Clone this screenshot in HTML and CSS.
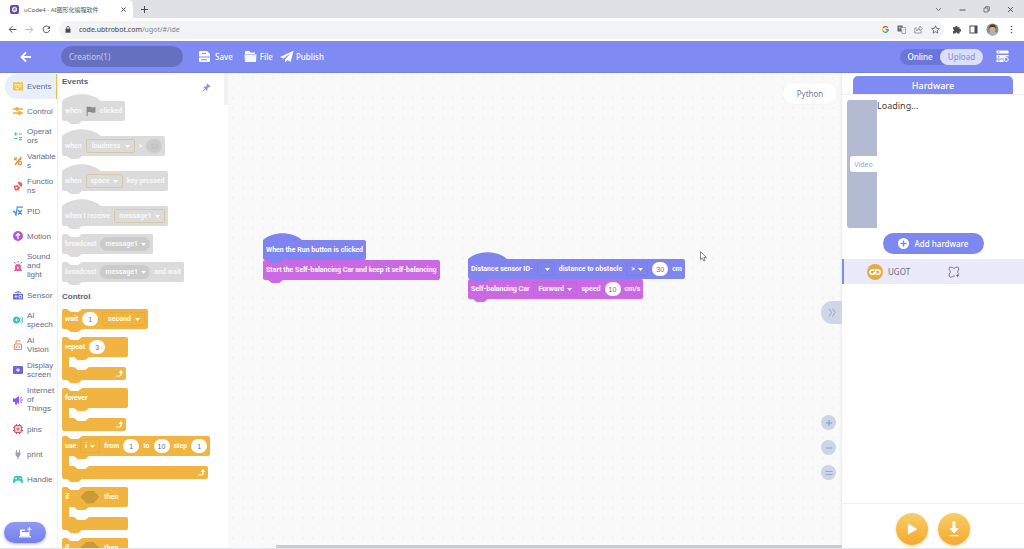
FILE: index.html
```html
<!DOCTYPE html>
<html lang="en">
<head>
    <meta charset="UTF-8">
    <meta name="viewport" content="width=device-width, initial-scale=1.0">
    <title>uCode4 - AI图形化编程软件</title>
    <link rel="stylesheet" href="styles.css">
</head>
<body>
    <!-- Browser tabs -->
    <div class="tabstrip">
        <div class="tab">
            <svg class="favicon" viewBox="0 0 9 9"><rect width="9" height="9" rx="2" fill="#5a4fb5"/><path d="M4.500 1.500 7 3v3L4.500 7.500 2 6V3z" fill="#e8d9f5"/><circle cx="4.500" cy="4.200" r="1.300" fill="#c58a3c"/></svg>
            <span class="tab-title">uCode4 - AI图形化编程软件</span>
            <button class="plain" aria-label="Close tab"><svg width="5" height="5" viewBox="0 0 5 5"><path d="M.5.5l4 4M4.500.5l-4 4" stroke="#45484c"/></svg></button>
        </div>
        <button class="plain new-tab" aria-label="New tab"><svg width="7" height="7" viewBox="0 0 7 7"><path d="M3.500 0v7M0 3.500h7" stroke="#45484c"/></svg></button>
        <div class="window-buttons">
            <button class="plain" aria-label="Search tabs"><svg width="7" height="7" viewBox="0 0 7 7"><path d="M1 2l2.500 2.700L6 2" stroke="#777" fill="none"/></svg></button>
            <button class="plain" aria-label="Minimize"><svg width="7" height="7" viewBox="0 0 7 7"><path d="M.5 4h6" stroke="#555"/></svg></button>
            <button class="plain" aria-label="Restore"><svg width="7" height="7" viewBox="0 0 7 7"><path d="M1 2h4v4H1zM2.500 2V.7h3.800v3.800H5" stroke="#555" stroke-width=".7" fill="none"/></svg></button>
            <button class="plain" aria-label="Close"><svg width="7" height="7" viewBox="0 0 7 7"><path d="M1 1l5 5M6 1L1 6" stroke="#444" stroke-width=".9"/></svg></button>
        </div>
    </div>
    <div class="toolbar">
        <button class="plain" aria-label="Back"><svg width="9" height="9" viewBox="0 0 9 9"><path d="M8.500 4.500H1.300M4.500 1.200L1.200 4.500l3.300 3.300" stroke="#555" fill="none"/></svg></button>
        <button class="plain" aria-label="Forward"><svg width="9" height="9" viewBox="0 0 9 9"><path d="M.5 4.500h7.200M4.500 1.200l3.300 3.300-3.300 3.300" stroke="#bbb" fill="none"/></svg></button>
        <button class="plain" aria-label="Reload"><svg width="9" height="9" viewBox="0 0 9 9"><path d="M7.600 5.200A3.300 3.300 0 1 1 7 2.300" stroke="#555" fill="none"/><path d="M8.100.7v3H5.200z" fill="#555"/></svg></button>
        <div class="omnibox">
            <svg width="6" height="7" viewBox="0 0 6 7"><path d="M.5 2.700h5v4h-5z" fill="#4a4d51"/><path d="M1.600 3V1.800a1.400 1.400 0 0 1 2.800 0V3" stroke="#4a4d51" stroke-width=".8" fill="none"/></svg>
            <span class="url">code.ubtrobot.com<span>/ugot/#/ide</span></span>
            <svg width="7" height="7" viewBox="0 0 7 7" fill="none" stroke-width="1.200"><path d="M5.700 1.500A2.800 2.800 0 0 0 1.100 2" stroke="#ea4335"/><path d="M1.100 2a2.900 2.900 0 0 0 0 3" stroke="#fbbc05"/><path d="M1.100 5a2.800 2.800 0 0 0 4 .8" stroke="#34a853"/><path d="M5.100 5.800a2.700 2.700 0 0 0 1.200-2.200H3.600" stroke="#4285f4"/></svg>
            <svg width="9" height="9" viewBox="0 0 9 9"><path d="M.5.5h5l1 6h-6z" fill="#666"/><path d="M4 2.500h4.500v6H5z" fill="#f5f5f5" stroke="#777" stroke-width=".6"/><path d="M1.500 2.500h2.500M2.800 1.500v3M5.500 4.500h2M6.500 4.500L5.700 7" stroke="#ccc" stroke-width=".7"/></svg>
            <svg width="9" height="9" viewBox="0 0 9 9" fill="none" stroke="#888" stroke-width=".8"><path d="M3 3H.8v5h6.400V6M2.700 6C3 3.500 4.500 3 6 3V1.200L8.400 3.700 6 5.800V4.300C4.500 4.300 3.500 4.800 2.700 6z"/></svg>
            <svg width="9" height="9" viewBox="0 0 9 9"><path d="M4.500.8l1.100 2.500 2.700.3-2 1.800.6 2.700-2.400-1.400-2.400 1.400.6-2.700-2-1.800 2.700-.3z" fill="none" stroke="#555" stroke-width=".8"/></svg>
        </div>
        <svg width="9" height="9" viewBox="0 0 9 9"><path d="M1 2.200h2.200a1.200 1.200 0 1 1 2.400 0h2v2a1.200 1.200 0 1 1 0 2.300v2H5.300a1 1 0 0 0-2 0H1V6.200a1 1 0 0 0 0-2z" fill="#4a4d51"/></svg>
        <svg width="9" height="9" viewBox="0 0 9 9"><rect x="1" y="1" width="7" height="7" fill="none" stroke="#4a4d51"/><path d="M5.500 1H8v7H5.500z" fill="#4a4d51"/></svg>
        <svg width="13" height="13" viewBox="0 0 13 13"><circle cx="6.500" cy="6.500" r="6" fill="#7d8f86"/><path d="M2 10.500C3 8.500 5 8 7 8.200s3.500 1 4 2.500A6 6 0 0 1 2 10.500z" fill="#9ab6c8"/><ellipse cx="6.500" cy="6.300" rx="2.800" ry="3.200" fill="#d9a98a"/><path d="M3 5.500C3 2.500 5 1.300 7 1.500s3.300 2 2.700 4C9 3.800 5 3.200 3 5.500z" fill="#4d3a2c"/></svg>
        <svg width="9" height="9" viewBox="0 0 9 9" fill="#555"><circle cx="4.500" cy="1.500" r=".8"/><circle cx="4.500" cy="4.500" r=".8"/><circle cx="4.500" cy="7.500" r=".8"/></svg>
    </div>

    <!-- App header -->
    <header class="header">
        <button class="plain back" aria-label="Go back"><svg width="12" height="12" viewBox="0 0 12 12"><path d="M11 6H2M6 1.500L1.500 6 6 10.500" stroke="#fff" stroke-width="1.800" fill="none"/></svg></button>
        <input class="project-name" type="text" value="Creation(1)" aria-label="Project name">
        <button class="plain menu"><svg width="13" height="13" viewBox="0 0 13 13"><path d="M2 1h7l3 3v2.500H1V2a1 1 0 0 1 1-1zM1 7.500h11V11a1 1 0 0 1-1 1H2a1 1 0 0 1-1-1z" fill="#fff"/><path d="M4 3.500h4M3 9.800h6" stroke="#7f8bf2"/></svg>Save</button>
        <button class="plain menu"><svg width="13" height="13" viewBox="0 0 13 13"><path d="M1 1h4l1.500 1.500H11V4H1z" fill="#fff"/><path d="M.5 4.500h12L12 12H1z" fill="#fff" opacity=".93"/></svg>File</button>
        <button class="plain menu"><svg width="14" height="13" viewBox="0 0 14 13"><path d="M13.500.8L0 7l3.500 1.600L11 3 5.200 9.300V12.500l2-2.300 3.600 1.600z" fill="#fff"/></svg>Publish</button>
        <div class="mode">
            <button class="plain">Online</button>
            <button class="plain active">Upload</button>
        </div>
        <button class="plain" aria-label="Devices"><svg width="13" height="13" viewBox="0 0 13 13"><rect x=".5" y=".5" width="12" height="3" rx=".5" fill="#fff"/><path d="M.5 5h12v1.500a4 4 0 0 0-4.500 2H.5zM.5 9.500H7.500V12H.5z" fill="#fff"/><circle cx="10.200" cy="9.500" r="2" fill="none" stroke="#fff"/><path d="M2 2h1.500M2 6.700h1.500M2 10.800h1.500" stroke="#7f8bf2"/></svg></button>
    </header>

    <main class="main">
        <nav class="categories">
            <a class="category active" href="#events"><svg viewBox="0 0 10 10"><rect y="1" width="10" height="8.500" rx="1" fill="#f4c43a"/><path d="M1 3.800h8M3 0v2M7 0v2" stroke="#fff" stroke-width=".8"/><path d="M2.500 5.800h1.500M5.500 5.800H8M2.500 7.700H6" stroke="#fff" stroke-width=".8"/></svg><span>Events</span></a>
            <a class="category" href="#control"><svg viewBox="0 0 10 10" stroke="#eeb33c" stroke-width="1.300" fill="none"><path d="M0 3h10M0 7h10"/><circle cx="4" cy="3" r="1.300" fill="#eeb33c"/><circle cx="6.500" cy="7" r="1.300" fill="#eeb33c"/></svg><span>Control</span></a>
            <a class="category" href="#operators"><svg viewBox="0 0 10 10" stroke="#5fc2a6" stroke-width="1.200"><path d="M1 3h3.500M2.700 1.200v3.600M6 3h3M1 7.500h3.500M6 6.700h3M6 8.700h3"/></svg><span>Operat<wbr>ors</span></a>
            <a class="category" href="#variables"><svg viewBox="0 0 10 10" stroke="#e98e3f" stroke-width="1.200" fill="none"><path d="M1 4l3-2.500M1.500 1.500l2 3M8.500 1L2 9"/><circle cx="7" cy="7" r="1.600"/><path d="M5.500 3.500h3"/></svg><span>Variable<wbr>s</span></a>
            <a class="category" href="#functions"><svg viewBox="0 0 10 10" fill="#e5635c"><path d="M4.500 1.500l2.500-1L9.500 3 8.500 6 6.500 4.500z"/><path d="M.5 5l4-1 1 1.500 2 .5-2 3.500H2z"/><circle cx="3.500" cy="6.700" r="1" fill="#fff"/></svg><span>Functio<wbr>ns</span></a>
            <a class="category" href="#pid"><svg viewBox="0 0 10 10" stroke="#4c8fe0" stroke-width="1.300" fill="none"><path d="M0 5.500h1.500l1.500 3.500L4.300 1.200H10M5 4l3.800 4.500M8.800 4L5 8.500"/></svg><span>PID</span></a>
            <a class="category" href="#motion"><svg viewBox="0 0 10 10"><circle cx="5" cy="5" r="5" fill="#b357d8"/><path d="M5 2v6M2.800 5l2.200-2.500L7 4.200" stroke="#fff" stroke-width="1.200" fill="none"/></svg><span>Motion</span></a>
            <a class="category" href="#sound"><svg viewBox="0 0 10 10" fill="#e0609a"><path d="M2 9V6a3 3 0 0 1 6 0v3h1v1H1V9z"/><path d="M5 0v1.800M1 1l1.400 1.500M9 1L7.600 2.500" stroke="#e0609a"/><circle cx="5" cy="6.700" r="1" fill="#fff"/></svg><span>Sound and light</span></a>
            <a class="category" href="#sensor"><svg viewBox="0 0 10 10"><path d="M0 4h10v5.500H0z" fill="#6968dc"/><path d="M2 2.800a4.500 4.500 0 0 1 6 0M5 2v2" stroke="#6968dc" fill="none"/><path d="M1.500 6.500h3M3 5v3M6 5.500h2.500v2.500H6z" stroke="#fff" stroke-width=".7" fill="none"/></svg><span>Sensor</span></a>
            <a class="category" href="#speech"><svg viewBox="0 0 10 10" fill="none" stroke="#3fc0ba"><circle cx="3.500" cy="5" r="3.500" fill="#3fc0ba" stroke="none"/><path d="M7.300 2.800a3 3 0 0 1 0 4.400M8.700 1.700a5 5 0 0 1 0 6.600" stroke-width=".9"/><path d="M2 4.500v1M3.500 3.500v3M5 4.500v1" stroke="#fff" stroke-width=".8"/></svg><span>AI<br>speech</span></a>
            <a class="category" href="#vision"><svg viewBox="0 0 10 10" fill="none" stroke="#e78a68"><path d="M1.500 4h7v5.500h-7zM3 4V2a2 2 0 0 1 4 0"/><path d="M3.500 8V6M5 8V5.500M6.500 8V6" stroke-width=".8"/></svg><span>AI<br>Vision</span></a>
            <a class="category" href="#display"><svg viewBox="0 0 10 10"><rect y="1" width="10" height="8" rx="1" fill="#6e68dc"/><path d="M3 5h4M5 3.200v3.600" stroke="#fff"/></svg><span>Display screen</span></a>
            <a class="category" href="#iot"><svg viewBox="0 0 10 10" fill="#9256e8"><path d="M0 3.500h2.500L6 1v8L4 7.500V9.500H2V7H0z"/><path d="M7 3.500l2-1.500M7 5h3M7 6.500L9 8" stroke="#9256e8"/></svg><span>Internet of Things</span></a>
            <a class="category" href="#pins"><svg viewBox="0 0 10 10" fill="none" stroke="#d9505c"><rect x="1.700" y="1.700" width="6.600" height="6.600" rx="1" stroke-width="1.200"/><rect x="4" y="4" width="2" height="2"/><path d="M3.500 0v1.500M6.500 0v1.500M3.500 8.500V10M6.500 8.500V10M0 3.500h1.500M0 6.500h1.500M8.500 3.500H10M8.500 6.500H10"/></svg><span>pins</span></a>
            <a class="category" href="#print"><svg viewBox="0 0 10 10" fill="#9da1b0"><path d="M2.500 3.500h5V6L6 8H4L2.500 6z"/><path d="M3.500 1v3M6.500 1v3M5 8v2" stroke="#9da1b0" stroke-width="1.100"/></svg><span>print</span></a>
            <a class="category" href="#handle"><svg viewBox="0 0 10 10"><path d="M2 2h6c1.500 1 2 5 2 7H8.500L7 6.800H3L1.500 9H0c0-2 .5-6 2-7z" fill="#35cbb8"/><path d="M2 4.500h2M3 3.500v2M6.500 4.500H8" stroke="#fff" stroke-width=".8"/></svg><span>Handle</span></a>
            <button class="plain extension" aria-label="Add extension"><svg width="13" height="11" viewBox="0 0 13 11"><path d="M1 2.500h5v1.200H3v1.600h6V5h1.500v4H1z" fill="#fff"/><path d="M0 9.200h12v1.200H0z" fill="#fff"/><path d="M10.300 0v4.400M8.100 2.200h4.400" stroke="#fff"/></svg></button>
        </nav>

        <section class="palette">
            <svg class="pin" viewBox="0 0 10 10"><path d="M6 .5L9.500 4l-1 .6-.7-.2L6 6.200l.2 1.800-1 .5-3.700-3.700.7-.9 1.800.2L5.600 2.300l-.2-1z" fill="#8a96ec"/><path d="M3.500 6.500L.7 9.300" stroke="#8a96ec"/></svg>
            <div class="palette-list">
            <h2 id="events">Events</h2>
            <div class="block hat off">when <svg class="flag" viewBox="0 0 9 9"><path d="M.5.5h1V9h-1zM1.500 1c2-1 3 1 7 0v4.800c-4 1-5-1-7 0z" fill="#8c8c8c"/></svg> clicked</div>
            <div class="block hat off">when <select class="field boxed wide" aria-label="Sensor value"><option>loudness</option></select> &gt; <input class="num" value="10" aria-label="Threshold"></div>
            <div class="block hat off">when <select class="field boxed" aria-label="Key"><option>space</option></select> key pressed</div>
            <div class="block hat off">when I receive <select class="field boxed" aria-label="Message"><option>message1</option></select></div>
            <div class="block notch off">broadcast <select class="field round" aria-label="Message"><option>message1</option></select></div>
            <div class="block notch off">broadcast <select class="field round" aria-label="Message"><option>message1</option></select> and wait</div>

            <h2 id="control">Control</h2>
            <div class="block notch control">wait <input class="num" value="1" aria-label="Duration"> <select class="field edged wide" aria-label="Unit"><option>second</option></select></div>
            <div class="loop">
                <div class="block notch control inner">repeat <input class="num" value="3" aria-label="Times"></div>
                <div class="mouth"></div>
                <div class="block notch control foot"><svg viewBox="0 0 7 7"><path d="M0 6h3.500q1.500 0 1.500-1.500V2.500" stroke="#fff" stroke-width="1.200" fill="none"/><path d="M2.700 3L5 0l2 3z" fill="#fff"/></svg></div>
            </div>
            <div class="loop last">
                <div class="block notch control inner">forever</div>
                <div class="mouth"></div>
                <div class="block notch control foot"><svg viewBox="0 0 7 7"><path d="M0 6h3.500q1.500 0 1.500-1.500V2.500" stroke="#fff" stroke-width="1.200" fill="none"/><path d="M2.700 3L5 0l2 3z" fill="#fff"/></svg></div>
            </div>
            <div class="loop">
                <div class="block notch control inner">use <select class="field edged" aria-label="Variable"><option>i</option></select> from <input class="num" value="1" aria-label="From"> to <input class="num" value="10" aria-label="To"> step <input class="num" value="1" aria-label="Step"></div>
                <div class="mouth"></div>
                <div class="block notch control foot"><svg viewBox="0 0 7 7"><path d="M0 6h3.500q1.500 0 1.500-1.500V2.500" stroke="#fff" stroke-width="1.200" fill="none"/><path d="M2.700 3L5 0l2 3z" fill="#fff"/></svg></div>
            </div>
            <div class="loop">
                <div class="block notch control inner if">if <span class="slot"></span> then</div>
                <div class="mouth"></div>
                <div class="block notch control foot full"></div>
            </div>
            <div class="loop">
                <div class="block notch control inner if">if <span class="slot"></span> then</div>
                <div class="mouth"></div>
            </div>
            </div>
        </section>

        <section class="canvas">
            <div class="stack stack-run">
                <div class="block hat event">When the Run button is clicked</div>
                <div class="block notch motion">Start the Self-balancing Car and keep it self-balancing</div>
            </div>
            <div class="stack stack-distance">
                <div class="block hat event">Distance sensor ID- <select class="field edged id" aria-label="Sensor ID"><option></option></select> distance to obstacle <select class="field edged" aria-label="Comparison"><option>&gt;</option></select> <input class="num" value="30" aria-label="Distance"> cm</div>
                <div class="block notch motion">Self-balancing Car <select class="field edged" aria-label="Direction"><option>Forward</option></select> speed <input class="num" value="10" aria-label="Speed"> cm/s</div>
            </div>
            <svg class="cursor" viewBox="0 0 7 11"><path d="M.5.7v8l2-1.700L3.800 10l1.300-.6L3.900 6.500h2.600z" fill="#fff" stroke="#555" stroke-width=".7"/></svg>
            <button class="plain python">Python</button>
            <button class="plain collapse" aria-label="Collapse panel"><svg width="8" height="9" viewBox="0 0 8 9"><path d="M1 .5L3.500 4.500 1 8.500M4.500.5L7 4.500l-2.500 4" stroke="#98a3c4" fill="none"/></svg></button>
            <div class="zoom">
                <button class="plain" aria-label="Zoom in"><svg viewBox="0 0 8 8"><path d="M1 4h6M4 1v6" stroke="#98a5cf" stroke-width="1.300"/></svg></button>
                <button class="plain" aria-label="Zoom out"><svg viewBox="0 0 8 8"><path d="M1 4h6" stroke="#98a5cf" stroke-width="1.100"/></svg></button>
                <button class="plain" aria-label="Reset zoom"><svg viewBox="0 0 8 8"><path d="M.5 2.500h7M.5 5.500h7" stroke="#98a5cf"/></svg></button>
            </div>
            <div class="scrollbar"></div>
        </section>

        <aside class="hardware">
            <h1>Hardware</h1>
            <div class="preview">
                <div class="video"><button class="plain">Video</button></div>
                <p>Loading...</p>
            </div>
            <button class="plain add"><svg width="11" height="11" viewBox="0 0 11 11"><circle cx="5.500" cy="5.500" r="5.500" fill="#fff"/><path d="M5.500 2.500v6M2.500 5.500h6" stroke="#7c87f0" stroke-width="1.300"/></svg>Add hardware</button>
            <div class="device">
                <svg width="16" height="16" viewBox="0 0 16 16"><circle cx="8" cy="8" r="8" fill="#e5ad3e"/><path d="M7.500 6H5a2 2 0 0 0 0 4.200h2.200V8M8.700 10.200V6H11a2 2 0 0 1 0 4.200H9.500" stroke="#fff" stroke-width="1.500" fill="none"/></svg>
                <span>UGOT</span>
                <svg width="12" height="12" viewBox="0 0 12 12"><path d="M4.500 1.200H2.300Q1.200 1.200 1.200 2.300v1.500l1 1v2l-1 1v2.200q0 1 1.100 1h2l1-1h1.500M4.500 1.200l1 1H7l1-1h1.700q1 0 1 1V4l-1 1v1.500l1 1v1M8.300 9.500h2.500M9.500 8.300v2.800" stroke="#666b85" fill="none" stroke-width=".9"/></svg>
            </div>
            <div class="actions">
                <button class="plain" aria-label="Run"><svg width="10" height="12" viewBox="0 0 12 14"><path d="M2 2l8.500 5L2 12z" fill="#fff" stroke="#fff" stroke-width="2" stroke-linejoin="round"/></svg></button>
                <button class="plain" aria-label="Download"><svg width="12" height="16" viewBox="0 0 12 16"><path d="M6 1.500v6" stroke="#fff" stroke-width="3" stroke-linecap="round"/><path d="M2 7.500h8L6 12z" fill="#fff" stroke="#fff" stroke-linejoin="round"/><path d="M1 14.700h10" stroke="#fff" stroke-width="1.100"/></svg></button>
            </div>
        </aside>
    </main>
</body>
</html>
```
FILE: styles.css
```css
* { box-sizing: border-box; }
body { font-family: "Noto Sans", "Noto Sans CJK SC", sans-serif; font-size: 8px; margin: 0; height: 100vh; display: flex; flex-direction: column; overflow: hidden; background: #fff; }
svg { display: block; flex-shrink: 0; }
h1, h2, p { margin: 0; }
.plain { border: 0; padding: 0; margin: 0; background: none; font: inherit; color: inherit; display: flex; align-items: center; justify-content: center; }

/* browser */
.tabstrip { display: flex; align-items: center; height: 18px; background: #dfe1e6; flex-shrink: 0; }
.tab { display: flex; align-items: center; align-self: stretch; gap: 5px; width: 133px; padding: 0 7px 0 10px; background: #fff; border-radius: 0 5px 0 0; }
.favicon { width: 9px; height: 9px; }
.tab-title { flex: 1; font-size: 6px; color: #55585c; white-space: nowrap; }
.new-tab { margin-left: 8px; }
.window-buttons { display: flex; gap: 17px; margin-left: auto; padding-right: 10px; }
.toolbar { display: flex; align-items: center; gap: 8px; height: 23px; padding: 0 8px; flex-shrink: 0; }
.omnibox { flex: 1; display: flex; align-items: center; gap: 8px; height: 18px; padding: 0 4px 0 6px; border-radius: 9px; background: #f1f3f4; }
.url { flex: 1; font-size: 7px; color: #3c4043; }
.url span { color: #80868b; }

/* header */
.header { display: flex; align-items: center; height: 32px; padding: 0 15px 0 20px; background: #7f8bf2; color: #fff; flex-shrink: 0; border-bottom: 1px solid #7681e0; }
.project-name { width: 122px; height: 21px; margin: 0 15px 0 29px; padding: 0 8px; border: 0; border-radius: 11px; background: #6670c0; color: #c6cbf2; font: 8px "Noto Sans", sans-serif; }
.menu { gap: 4px; margin-right: 11px; font-weight: 500; }
.menu + .menu { gap: 3px; }
.menu + .menu + .menu { margin-left: -4px; gap: 2px; }
.mode { display: flex; margin-left: auto; margin-right: 13px; border-radius: 8px; background: #6b76dc; }
.mode button { width: 40px; height: 16px; border-radius: 8px; font-weight: 500; }
.mode .active { width: 43px; background: #dcdffb; color: #8b94dc; }

.main { flex: 1; display: flex; min-height: 0; border-bottom: 1px solid #e3e4f0; }

/* categories */
.categories { position: relative; width: 58px; flex-shrink: 0; padding: 1px 0 0 5px; border-right: 1px solid #eff0f5; font-family: "Liberation Sans", Arial, sans-serif; font-size: 8px; line-height: 9px; }
.category { display: flex; align-items: center; gap: 4px; min-height: 25px; padding: 3px 0 4px 8px; color: #666b85; text-decoration: none; }
.category svg { width: 10px; height: 10px; }
.category span { width: 30px; }
.category.active { background: #e9eefb; border-radius: 12px 0 0 12px; border-right: 1px solid #e5c04c; }
.extension { position: absolute; left: 4px; bottom: 5px; width: 42px; height: 21px; border-radius: 11px; background: linear-gradient(#8f9af5, #7480ea); box-shadow: 0 1px 3px #a9b1f0; }

/* palette */
.palette { position: relative; width: 170px; flex-shrink: 0; padding: 4px 0 0 4px; overflow: hidden; }
.palette::after { content: ""; position: absolute; right: 0; top: 0; width: 4px; height: 32px; background: #f1f1f3; }
.palette-list { display: flex; flex-direction: column; align-items: flex-start; gap: 8px; }
.palette h2 { font: bold 8px/10px "Liberation Sans", Arial, sans-serif; color: #575e75; margin-bottom: -1px; }
.palette .block + h2 { margin-top: 2px; }
.pin { position: absolute; right: 17px; top: 10px; width: 9px; height: 9px; }

/* blocks */
.block { position: relative; display: flex; align-items: center; gap: 4px; height: 20px; padding: 0 3px; border-radius: 2px; background: var(--fill); color: #fff; font: bold 7px Roboto, sans-serif; white-space: nowrap; --hole: #fff; }
.block::after { content: ""; position: absolute; left: 5px; top: 100%; width: 15px; height: 3px; background: var(--fill); clip-path: polygon(0 0, 100% 0, 75% 100%, 25% 100%); z-index: 1; }
.notch::before { content: ""; position: absolute; left: 5px; top: 0; width: 15px; height: 3px; background: var(--hole); clip-path: polygon(0 0, 100% 0, 75% 100%, 25% 100%); }
.hat { margin-top: 7px; border-top-left-radius: 0; }
.hat::before { content: ""; position: absolute; left: 0; bottom: 100%; width: 39px; height: 7px; background: var(--fill); clip-path: path("M0 7 C10 -2 29 -2 39 7 Z"); }
.off { --fill: #dbdbdb; --dark: #cbcbcb; color: #f8f8f8; }
.control { --fill: #f1b440; --dark: #e8ac3c; }
.event { --fill: #8084f0; --dark: #7a7ee8; }
.motion { --fill: #cb68e4; --dark: #c562de; }
.flag { width: 10px; height: 10px; }

.field { appearance: none; height: 14px; border: 0; margin: 0; padding: 0 12px 0 4px; border-radius: 2px; color: inherit; font: inherit; background: url("data:image/svg+xml,%3Csvg xmlns='http://www.w3.org/2000/svg' width='5' height='3'%3E%3Cpath d='M0 0h5L2.500 3z' fill='white'/%3E%3C/svg%3E") no-repeat right 4px center; }
.boxed { border: 1px solid #d6caa4; }
.edged { border: 1px solid var(--dark); }
.wide { padding: 0 13px 0 5px; }
.round { border-radius: 7px; background-color: var(--dark); padding-left: 5px; }
.id { width: 18px; }
.num { width: 16px; height: 14px; padding: 0; border: 0; border-radius: 7px; background: #fff; color: #686d84; text-align: center; font: 7px "Liberation Sans", Arial, sans-serif; }
.off .num { background: #cbcbcb; color: #b9b9b9; }
.slot { width: 19px; height: 13px; margin: 0 1px 0 7px; background: #c99a35; clip-path: polygon(0 50%, 33% 0, 67% 0, 100% 50%, 67% 100%, 33% 100%); }

.loop { display: flex; flex-direction: column; }
.last { margin-bottom: -3px; }
.inner { min-width: 66px; }
.inner::after { left: 12px; }
.mouth { width: 7px; height: 12px; background: #f1b440; margin: -1px 0; }
.foot { height: 13px; margin-right: 2px; justify-content: flex-end; }
.foot::before { left: 12px; }
.foot svg { width: 7px; height: 7px; }
.full { margin-right: 0; }
.last .foot::after { display: none; }

/* canvas */
.canvas { position: relative; flex: 1; min-width: 0; overflow: hidden; background: #f9f9f9 radial-gradient(circle, #f3f3f5 1px, transparent 1px) 0 0 / 10px 10px; }
.stack { position: absolute; display: flex; flex-direction: column; align-items: flex-start; }
.stack .notch::before { display: none; }
.stack-run { left: 35px; top: 160px; }
.stack-distance { left: 240px; top: 179px; }
.cursor { position: absolute; left: 472px; top: 178px; width: 7px; height: 11px; }
.python { position: absolute; right: 5px; top: 10px; width: 54px; height: 21px; border-radius: 11px; background: #fff; color: #777b8c; box-shadow: 0 0 3px #eee; }
.collapse { position: absolute; right: 0; top: 228px; width: 21px; height: 23px; border-radius: 12px 0 0 12px; background: #cfd6e6; }
.zoom { position: absolute; right: 6px; bottom: 68px; display: flex; flex-direction: column; gap: 10px; }
.zoom button { width: 15px; height: 15px; border-radius: 50%; background: #cdd4e5; }
.zoom svg { width: 8px; height: 8px; }
.scrollbar { position: absolute; left: 48px; right: 0; bottom: 0; height: 3px; background: #cbcbcd; }

/* hardware */
.hardware { position: relative; display: flex; flex-direction: column; align-items: center; width: 182px; flex-shrink: 0; padding-top: 3px; background: #fff; box-shadow: 0 0 3px #d5daea; color: #666a7c; clip-path: inset(0 0 0 -4px); }
.hardware h1 { align-self: stretch; margin: 0 11px; height: 18px; border-radius: 5px 5px 0 0; background: #7f8bf2; color: #fff; font-size: 9px; font-weight: 500; line-height: 19px; text-align: center; }
.preview { display: flex; align-self: stretch; padding: 5px; border-top: 1px solid #eef0f6; }
.preview p { font-size: 9px; line-height: 12px; color: #444; }
.video { display: flex; align-items: center; justify-content: flex-end; width: 30px; height: 128px; border-radius: 3px 0 0 3px; background: #b2bbd2; }
.video button { width: 27px; height: 16px; border-radius: 3px 0 0 3px; background: #fff; color: #85a9dc; font-size: 7px; }
.add { gap: 6px; width: 101px; height: 21px; border-radius: 11px; background: #7c87f0; color: #fff; font-weight: 500; }
.device { display: flex; align-items: center; align-self: stretch; gap: 5px; height: 25px; margin-top: 5px; padding-left: 23px; border-left: 2px solid #7f8bf2; background: #eaeafc; }
.device span { width: 55px; }
.actions { display: flex; justify-content: center; align-self: stretch; gap: 10px; height: 45px; margin-top: auto; padding-top: 9px; border-top: 1px solid #eef0f6; }
.actions button { width: 32px; height: 32px; border-radius: 50%; background: linear-gradient(#f8cd68, #f5a92f); box-shadow: 0 1px 3px #f5d9a0; }
```
